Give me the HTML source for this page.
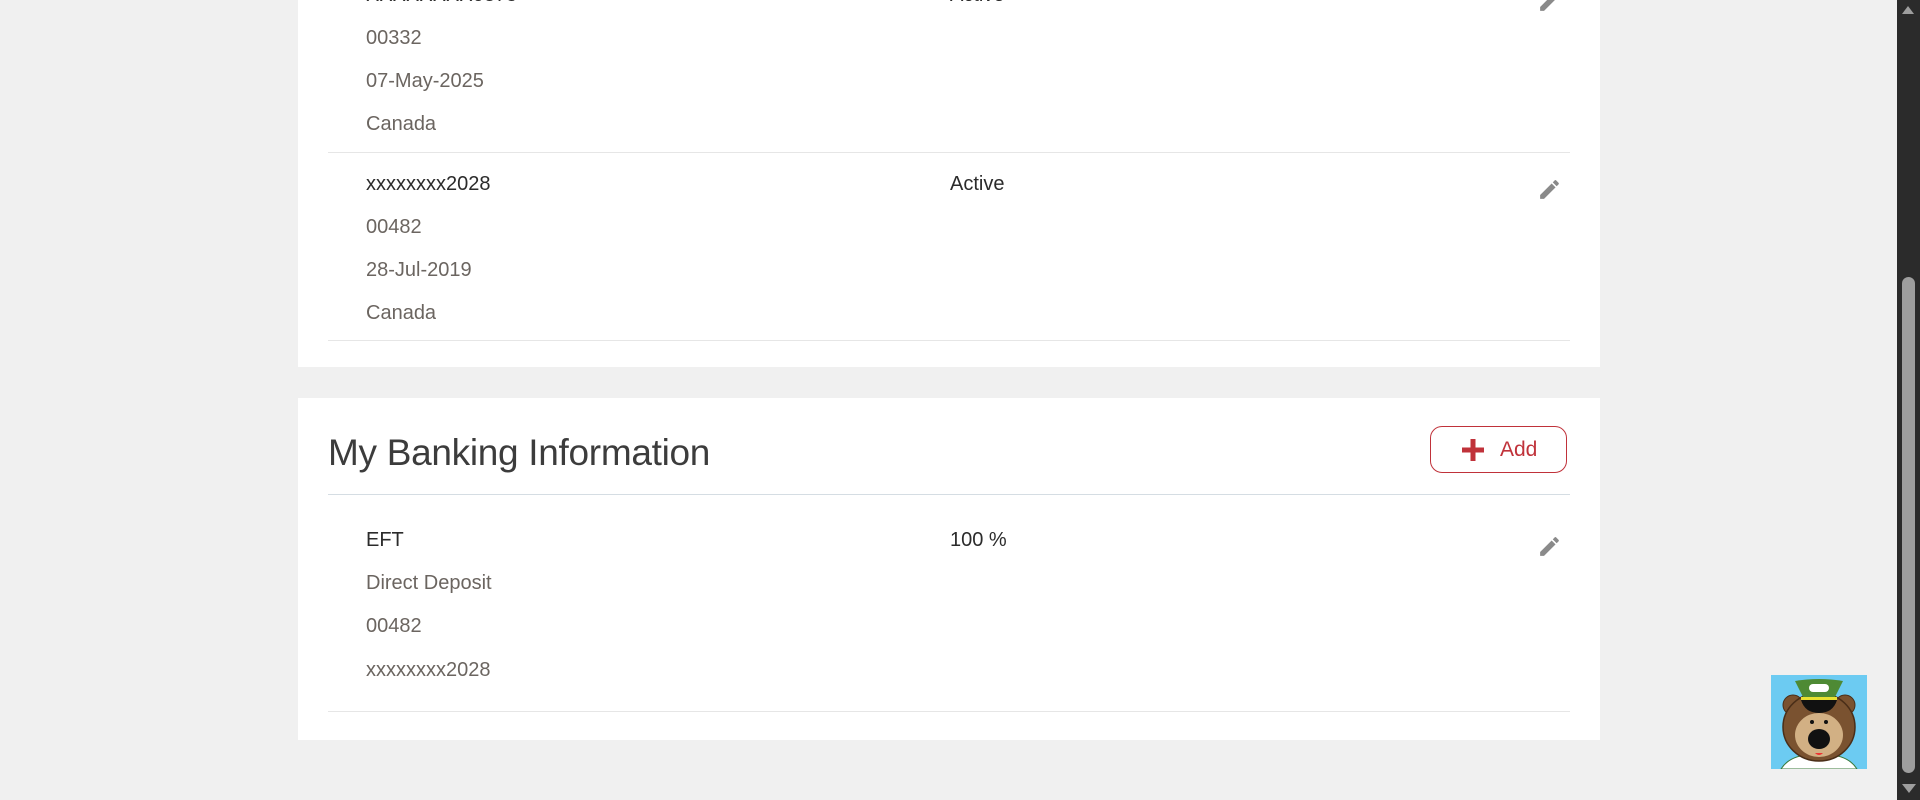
<!DOCTYPE html>
<html><head><style>
*{margin:0;padding:0;box-sizing:border-box}
body{width:1920px;height:800px;background:#f0f0f0;font-family:"Segoe UI","Liberation Sans",sans-serif;position:relative;overflow:hidden}
.card{position:absolute;left:298px;width:1302px;background:#fff}
.t{position:absolute;font-size:20px;line-height:24px;color:#6b6560;white-space:nowrap}
.d{color:#2b2b2b}
.hr{position:absolute;left:328px;width:1242px;height:1px;background:#e6e6e6}
.pen{position:absolute;width:25px;height:25px}
</style></head><body>
<div class="card" style="top:0;height:367px"></div>
<div class="card" style="top:398px;height:342px"></div>

<div class="t d" style="left:366px;top:-17px">XXXXXXXX0375</div>
<div class="t d" style="left:950px;top:-17px">Active</div>
<div class="t" style="left:366px;top:26px">00332</div>
<div class="t" style="left:366px;top:69px">07-May-2025</div>
<div class="t" style="left:366px;top:112px">Canada</div>
<div class="hr" style="top:152px"></div>

<div class="t d" style="left:366px;top:172px">xxxxxxxx2028</div>
<div class="t d" style="left:950px;top:172px">Active</div>
<div class="t" style="left:366px;top:215px">00482</div>
<div class="t" style="left:366px;top:258px">28-Jul-2019</div>
<div class="t" style="left:366px;top:301px">Canada</div>
<div class="hr" style="top:340px"></div>

<div style="position:absolute;left:328px;top:429px;font-size:37px;font-weight:normal;color:#3c3c3c;line-height:48px;letter-spacing:-0.3px">My Banking Information</div>
<div style="position:absolute;left:1430px;top:426px;width:137px;height:47px;border:1px solid #c0323a;border-radius:12px;color:#c0323a;font-size:21px;font-weight:normal;line-height:45px">
<svg style="position:absolute;left:31px;top:12px" width="22" height="22" viewBox="0 0 22 22"><path d="M8.5 0h5v8.5H22v5h-8.5V22h-5v-8.5H0v-5h8.5z" fill="#c0323a"/></svg>
<span style="position:absolute;left:69px;top:0">Add</span></div>
<div class="hr" style="top:494px;background:#d5dde3"></div>

<div class="t d" style="left:366px;top:528px">EFT</div>
<div class="t d" style="left:950px;top:528px">100 %</div>
<div class="t" style="left:366px;top:571px">Direct Deposit</div>
<div class="t" style="left:366px;top:614px">00482</div>
<div class="t" style="left:366px;top:658px">xxxxxxxx2028</div>
<div class="hr" style="top:711px"></div>

<svg class="pen" style="left:1537px;top:-11px" viewBox="0 0 24 24"><path d="M3 17.25V21h3.75L17.81 9.94l-3.75-3.75L3 17.25zM20.71 7.04a1 1 0 000-1.41l-2.34-2.34a1 1 0 00-1.41 0l-1.83 1.83 3.75 3.75 1.83-1.83z" fill="#8a8a8a"/></svg>
<svg class="pen" style="left:1537px;top:177px" viewBox="0 0 24 24"><path d="M3 17.25V21h3.75L17.81 9.94l-3.75-3.75L3 17.25zM20.71 7.04a1 1 0 000-1.41l-2.34-2.34a1 1 0 00-1.41 0l-1.83 1.83 3.75 3.75 1.83-1.83z" fill="#8a8a8a"/></svg>
<svg class="pen" style="left:1537px;top:534px" viewBox="0 0 24 24"><path d="M3 17.25V21h3.75L17.81 9.94l-3.75-3.75L3 17.25zM20.71 7.04a1 1 0 000-1.41l-2.34-2.34a1 1 0 00-1.41 0l-1.83 1.83 3.75 3.75 1.83-1.83z" fill="#8a8a8a"/></svg>

<svg style="position:absolute;left:1771px;top:675px" width="96" height="94" viewBox="0 0 96 94">
<rect width="96" height="94" fill="#6ccbf2"/>
<path d="M10 94 Q20 78 48 80 Q76 78 86 94z" fill="#fff" stroke="#3a7a3a" stroke-width="1"/>
<circle cx="22" cy="30" r="10" fill="#7a5230" stroke="#4a2e18"/>
<circle cx="74" cy="30" r="10" fill="#7a5230" stroke="#4a2e18"/>
<ellipse cx="48" cy="52" rx="36" ry="34" fill="#7a5230" stroke="#4a2e18" stroke-width="1.5"/>
<ellipse cx="48" cy="60" rx="24" ry="22" fill="#d2b084"/>
<ellipse cx="48" cy="64" rx="11" ry="10" fill="#111"/>
<path d="M44 78 Q48 82 52 78z" fill="#e33"/>
<circle cx="41" cy="47" r="2" fill="#111"/><circle cx="55" cy="47" r="2" fill="#111"/>
<path d="M24 6 Q48 2 72 6 L64 22 L32 22z" fill="#4e8a34"/>
<rect x="30" y="22" width="36" height="3" fill="#e8e030"/>
<path d="M30 25 H66 Q62 38 48 38 Q34 38 30 25z" fill="#111"/>
<rect x="38" y="9" width="20" height="8" rx="4" fill="#fff"/>
</svg>

<div style="position:absolute;left:1897px;top:0;width:23px;height:800px;background:#2b2b2b"></div>
<div style="position:absolute;left:1902px;top:277px;width:13px;height:496px;background:#9e9e9e;border-radius:7px"></div>
<div style="position:absolute;left:1902px;top:6px;width:0;height:0;border-left:6px solid transparent;border-right:6px solid transparent;border-bottom:8px solid #9e9e9e"></div>
<div style="position:absolute;left:1902px;top:784px;width:0;height:0;border-left:7px solid transparent;border-right:7px solid transparent;border-top:9px solid #9e9e9e"></div>
</body></html>
